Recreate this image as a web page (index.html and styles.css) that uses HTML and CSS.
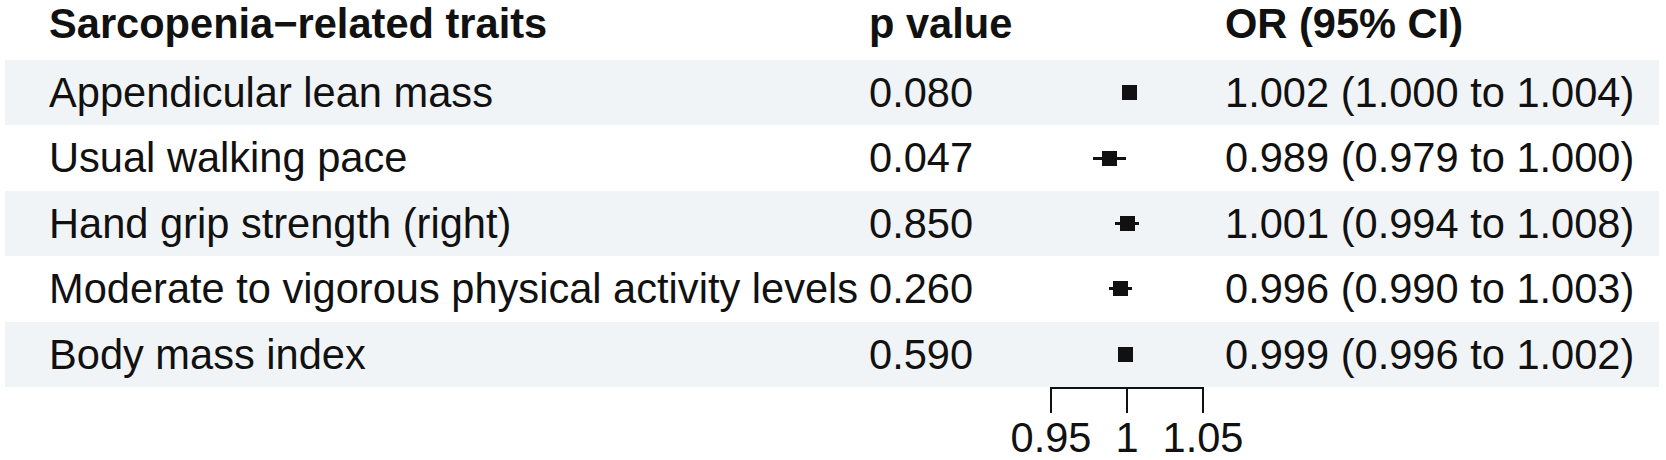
FILE: index.html
```html
<!DOCTYPE html>
<html lang="en">
<head>
<meta charset="utf-8">
<title>Forest plot</title>
<link rel="stylesheet" href="styles.css">
</head>
<body>
<div class="forest">
  <div class="row head">
    <div class="cell trait">Sarcopenia−related traits</div>
    <div class="cell pval">p value</div>
    <div class="cell plot"></div>
    <div class="cell ci-text">OR (95% CI)</div>
  </div>

  <div class="row band">
    <div class="cell trait">Appendicular lean mass</div>
    <div class="cell pval">0.080</div>
    <div class="cell plot">
      <span class="ci" style="left:126px;width:6px"></span>
      <span class="pt" style="left:129px"></span>
    </div>
    <div class="cell ci-text">1.002 (1.000 to 1.004)</div>
  </div>

  <div class="row">
    <div class="cell trait">Usual walking pace</div>
    <div class="cell pval">0.047</div>
    <div class="cell plot">
      <span class="ci" style="left:93px;width:33px"></span>
      <span class="pt" style="left:109.5px"></span>
    </div>
    <div class="cell ci-text">0.989 (0.979 to 1.000)</div>
  </div>

  <div class="row band">
    <div class="cell trait">Hand grip strength (right)</div>
    <div class="cell pval">0.850</div>
    <div class="cell plot">
      <span class="ci" style="left:115px;width:24px"></span>
      <span class="pt" style="left:127px"></span>
    </div>
    <div class="cell ci-text">1.001 (0.994 to 1.008)</div>
  </div>

  <div class="row">
    <div class="cell trait">Moderate to vigorous physical activity levels</div>
    <div class="cell pval">0.260</div>
    <div class="cell plot">
      <span class="ci" style="left:109px;width:23px"></span>
      <span class="pt" style="left:120px"></span>
    </div>
    <div class="cell ci-text">0.996 (0.990 to 1.003)</div>
  </div>

  <div class="row band">
    <div class="cell trait">Body mass index</div>
    <div class="cell pval">0.590</div>
    <div class="cell plot">
      <span class="ci" style="left:120px;width:9px"></span>
      <span class="pt" style="left:125px"></span>
    </div>
    <div class="cell ci-text">0.999 (0.996 to 1.002)</div>
  </div>

  <div class="row axis-row">
    <div class="cell trait"></div>
    <div class="cell pval"></div>
    <div class="cell plot axis">
      <span class="axis-line"></span>
      <span class="tick" style="left:50px"></span>
      <span class="tick" style="left:126px"></span>
      <span class="tick" style="left:202px"></span>
      <span class="tick-label" style="left:51px">0.95</span>
      <span class="tick-label" style="left:127px">1</span>
      <span class="tick-label" style="left:203px">1.05</span>
    </div>
    <div class="cell ci-text"></div>
  </div>
</div>
</body>
</html>
```

FILE: styles.css
```css
html, body {
  margin: 0;
  padding: 0;
  background: #ffffff;
}

body {
  width: 1666px;
  height: 460px;
  overflow: hidden;
  font-family: "Liberation Sans", Arial, Helvetica, sans-serif;
  color: #111111;
}

.forest {
  padding-left: 5px;
  width: 1654px;
}

.row {
  display: grid;
  grid-template-columns: 864px 131px 225px 434px;
  height: 65.4px;
  font-size: 41.6px;
  line-height: 65.4px;
  white-space: nowrap;
}

.row.head {
  height: 60px;
  line-height: 48px;
  font-weight: bold;
}

.row.band {
  background: #f1f4f6;
}

.cell {
  position: relative;
}

.trait {
  padding-left: 44px;
}

.ci {
  position: absolute;
  top: 50%;
  height: 3px;
  margin-top: -1.5px;
  background: #111111;
}

.pt {
  position: absolute;
  top: 50%;
  width: 15px;
  height: 15px;
  margin-top: -7.5px;
  margin-left: -7.5px;
  background: #111111;
}

.row.axis-row {
  height: 73px;
}

.axis-line {
  position: absolute;
  top: 0;
  left: 50px;
  width: 154px;
  height: 2px;
  background: #111111;
}

.tick {
  position: absolute;
  top: 0;
  width: 2px;
  height: 26px;
  background: #111111;
}

.tick-label {
  position: absolute;
  top: 31px;
  line-height: 40px;
  font-size: 41.6px;
  transform: translateX(-50%);
}
```
